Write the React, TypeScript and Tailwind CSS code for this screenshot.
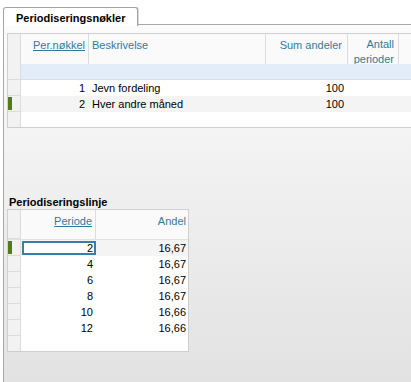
import React from "react";

const keys = [
  { id: 1, name: "Jevn fordeling", sum: 100, current: false },
  { id: 2, name: "Hver andre måned", sum: 100, current: true },
];

const lines = [
  { period: 2, share: "16,67" },
  { period: 4, share: "16,67" },
  { period: 6, share: "16,67" },
  { period: 8, share: "16,67" },
  { period: 10, share: "16,66" },
  { period: 12, share: "16,66" },
];

function Selector({ current = false }: { current?: boolean }) {
  return (
    <div className="h-full border-r border-b border-[#dcdcdc] bg-[#f2f2f2] flex items-center">
      {current && <div className="ml-0 h-[13px] w-[4px] bg-[#557a1c]" />}
    </div>
  );
}

export default function App() {
  return (
    <div className="flex h-[382px] w-[411px] flex-col overflow-hidden bg-white font-['Liberation_Sans',Arial,sans-serif] text-[11px] leading-[14px] text-black">
      {/* tab strip */}
      <div className="flex h-[26px] items-end pl-[3px]">
        <div className="flex h-[19px] w-[135px] items-start rounded-t-[3px] border border-b-0 border-[#a3a3a3] bg-white pl-[12px] pt-[3px] font-bold shadow-[1px_0_0_#d8d8d8]">
          Periodiseringsnøkler
        </div>
        <div className="h-px flex-1 bg-[#a8a8a8] -translate-y-px" />
      </div>

      {/* panel */}
      <div className="ml-[3px] flex flex-1 flex-col border-l border-[#a8a8a8] bg-gradient-to-b from-[#fbfbfb] to-[#e2e2e2] pl-[3px] pt-[7px]">
        {/* keys grid */}
        <div className="w-[420px] border-t border-l border-b border-[#cfcfcf] bg-white">
          <div className="grid h-[30px] grid-cols-[13px_68px_177px_82px_51px_1fr] border-b border-[#d6dfe9] text-[#2f7c9b]">
            <Selector />
            <div className="border-r border-[#dcdcdc] bg-[#fafafa] pr-[3px] pt-[4px] text-right underline">Per.nøkkel</div>
            <div className="border-r border-[#dcdcdc] bg-[#fafafa] pl-[3px] pt-[4px]">Beskrivelse</div>
            <div className="border-r border-[#dcdcdc] bg-[#fafafa] pr-[5px] pt-[4px] text-right">Sum andeler</div>
            <div className="border-r border-[#dcdcdc] bg-[#fafafa] pr-[4px] pt-[3px] text-right leading-[15px]">
              Antall
              <br />
              perioder
            </div>
            <div className="bg-[#fafafa]" />
          </div>
          <div className="grid h-[16px] grid-cols-[13px_1fr]">
            <Selector />
            <div className="border-b border-[#d3e0ef] bg-[#e2edf9]" />
          </div>
          {keys.map((k) => (
            <div
              key={k.id}
              className={`grid h-[16px] grid-cols-[13px_68px_177px_82px_1fr] items-center ${k.current ? "bg-[#f4f4f4]" : "bg-white"}`}
            >
              <Selector current={k.current} />
              <div className="pr-[4px] text-right">{k.id}</div>
              <div className="pl-[3px]">{k.name}</div>
              <div className="pr-[4px] text-right">{k.sum}</div>
              <div />
            </div>
          ))}
          <div className="grid h-[15px] grid-cols-[13px_1fr]">
            <div className="h-full border-r border-[#dcdcdc] bg-[#f2f2f2]" />
            <div />
          </div>
        </div>

        {/* lines */}
        <div className="mt-[68px] pl-[2px] font-bold leading-[13px]">Periodiseringslinje</div>
        <div className="w-[182px] border border-[#cfcfcf] bg-white">
          <div className="grid h-[30px] grid-cols-[13px_75px_1fr] border-b border-[#e2e2e2] text-[#2f7c9b]">
            <Selector />
            <div className="border-r border-[#dcdcdc] bg-[#fafafa] pr-[3px] pt-[4px] text-right underline">Periode</div>
            <div className="bg-[#fafafa] pr-[2px] pt-[4px] text-right">Andel</div>
          </div>
          {lines.map((l, i) => (
            <div
              key={l.period}
              className={`grid h-[16px] grid-cols-[13px_75px_1fr] items-center ${i === 0 ? "bg-[#f4f4f4]" : "bg-white"}`}
            >
              <Selector current={i === 0} />
              {i === 0 ? (
                <div className="ml-[1px] mr-[0px] flex h-[14px] items-center justify-end border-2 border-[#3c7cab] bg-white pr-[1px]">
                  {l.period}
                </div>
              ) : (
                <div className="pr-[3px] text-right">{l.period}</div>
              )}
              <div className="pr-[2px] text-right">{l.share}</div>
            </div>
          ))}
          <div className="grid h-[15px] grid-cols-[13px_1fr]">
            <div className="h-full border-r border-[#dcdcdc] bg-[#f2f2f2]" />
            <div />
          </div>
        </div>
      </div>
    </div>
  );
}
